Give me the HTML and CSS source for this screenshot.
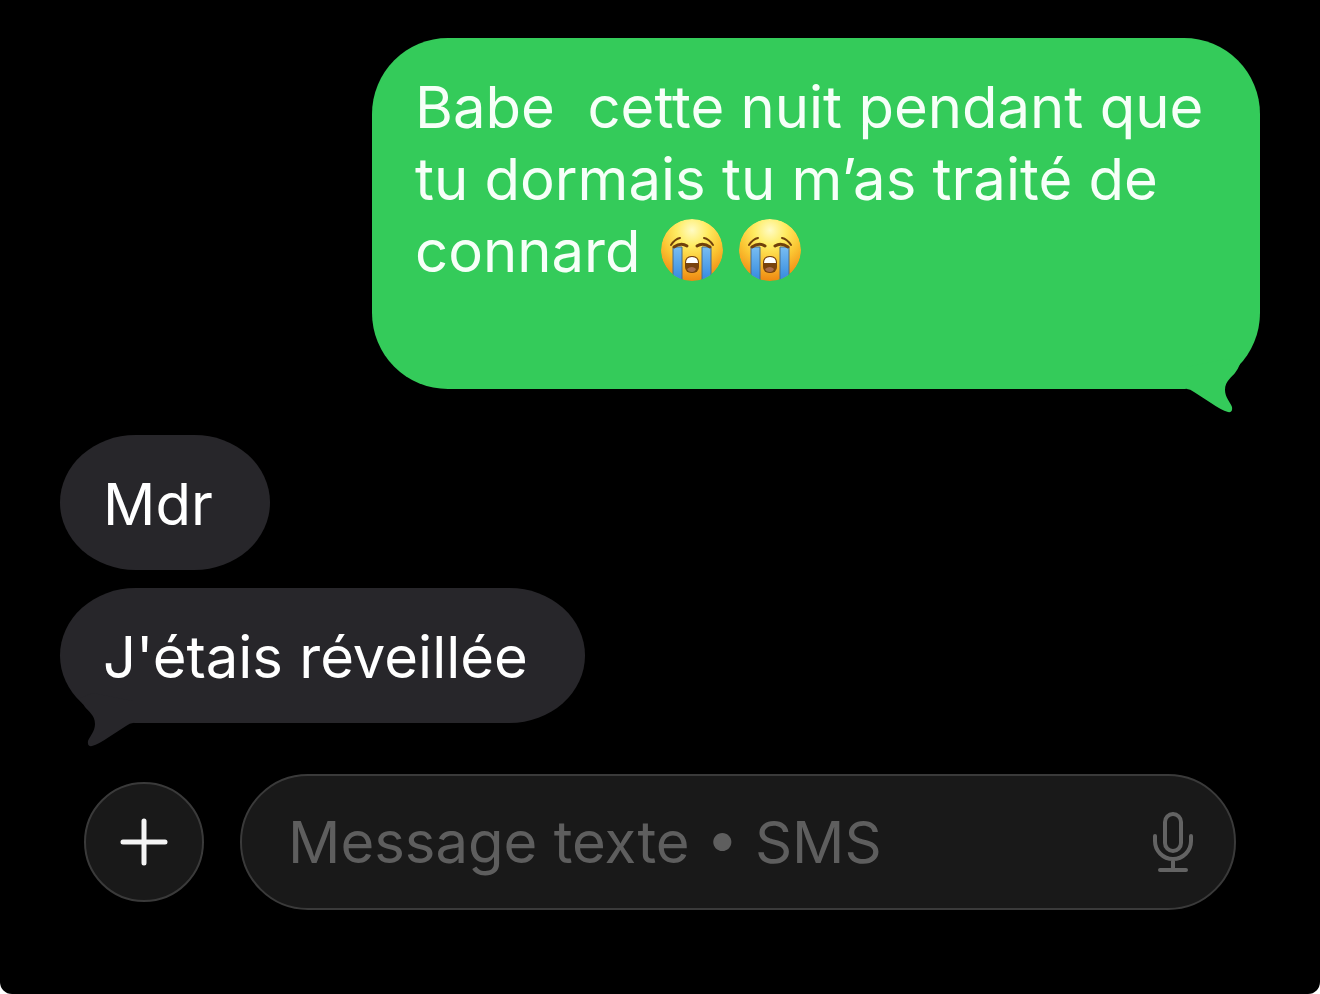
FILE: index.html
```html
<!DOCTYPE html>
<html lang="fr">
<head>
    <meta charset="UTF-8">
    <meta name="viewport" content="width=device-width, initial-scale=1.0">
    <title>Messages</title>
    <link rel="stylesheet" href="styles.css">
</head>
<body>
    <!-- Shapes shared by the messages -->
    <svg class="defs" aria-hidden="true">
        <defs>
            <radialGradient id="face" cx="50%" cy="18%" r="84%">
                <stop offset="0" stop-color="#fffbc4"/>
                <stop offset="0.3" stop-color="#ffec62"/>
                <stop offset="0.6" stop-color="#fbc532"/>
                <stop offset="1" stop-color="#ee8410"/>
            </radialGradient>
            <linearGradient id="tear" x1="0" y1="0" x2="0" y2="1">
                <stop offset="0" stop-color="#78bdf2"/>
                <stop offset="1" stop-color="#3389de"/>
            </linearGradient>
            <clipPath id="round"><circle cx="31" cy="31" r="31"/></clipPath>
            <symbol id="sob" viewBox="0 0 62 62">
                <g clip-path="url(#round)">
                    <circle cx="31" cy="31" r="31" fill="url(#face)"/>
                    <path d="M12 28h9v34h-9zM41 28h9v34h-9z" fill="url(#tear)" stroke="#4a6d88" stroke-width="1"/>
                </g>
                <g fill="none" stroke="#70400b" stroke-linecap="round">
                    <path d="M10 26q4-6 9-7M43 19q5 1 9 7" stroke-width="2"/>
                    <path d="M13 28q7-5 13-1M36 27q6-4 13 1" stroke-width="3"/>
                </g>
                <rect x="24" y="37" width="14" height="17" rx="6" fill="#78420d"/>
                <path d="M25 44q0-6 6-6t6 6z" fill="#fff"/>
                <path d="M26 50q5-4 9 0-1 3-4 3-4 0-5-3z" fill="#a76a4c"/>
            </symbol>
            <symbol id="tail" viewBox="0 0 60 54">
                <path d="M0 8V30Q3 30 7 33L24 44Q34 51 41 53Q46 54 45 48C43 43 38 38 38 31C38 22 45 18 48 14Q51 10 53 5L40 0Z"/>
            </symbol>
        </defs>
    </svg>

    <main class="chat">
        <div class="bubble sent">
            <p>Babe  cette nuit pendant que tu dormais tu m’as traité de connard <svg class="emoji" role="img" aria-label="😭"><use href="#sob"/></svg><svg class="emoji" role="img" aria-label="😭"><use href="#sob"/></svg><br><br></p>
            <svg class="tail" aria-hidden="true"><use href="#tail"/></svg>
        </div>
        <div class="bubble received">
            <p>Mdr</p>
        </div>
        <div class="bubble received">
            <p>J'étais réveillée</p>
            <svg class="tail" aria-hidden="true"><use href="#tail"/></svg>
        </div>
    </main>

    <form class="composer">
        <button class="add" type="button" aria-label="Ajouter">
            <svg viewBox="0 0 48 48"><path d="M24 3v42M3 24h42"/></svg>
        </button>
        <div class="field">
            <input type="text" placeholder="Message texte • SMS" aria-label="Message texte • SMS">
            <button class="mic" type="button" aria-label="Dicter">
                <svg viewBox="0 0 42 60">
                    <rect x="13" y="2" width="16" height="37" rx="8"/>
                    <path d="M3 24v5a18 18 0 0 0 36 0v-5M21 47v11M8 58h26"/>
                </svg>
            </button>
        </div>
    </form>
</body>
</html>
```
FILE: styles.css
```css
* {
    box-sizing: border-box;
}

html {
    background: #fff;
}

body {
    margin: 0;
    min-height: 100vh;
    background: #000;
    border-radius: 0 0 12px 12px;
    font-family: Inter, "Liberation Sans", sans-serif;
    font-size: 58px;
    line-height: 72px;
    color: #fff;
}

.defs {
    position: absolute;
    width: 0;
    height: 0;
}

.chat {
    display: flex;
    flex-direction: column;
    align-items: flex-start;
    gap: 18px;
    padding: 38px 60px 0;
}

/* Bubbles */
.bubble {
    position: relative;
    padding: 33px 57px 30px 43px;
    border-radius: 76px / 68px;
}

.bubble p {
    margin: 0;
    white-space: pre-wrap;
}

.sent {
    align-self: flex-end;
    width: 74%;
    margin-bottom: 28px;
    padding-right: 43px;
    border-radius: 76px;
    background: #34cb5a;
    color: #f6fff8;
}

.received {
    background: #27262a;
}

.tail {
    position: absolute;
    bottom: -24px;
    width: 60px;
    height: 54px;
}

.sent .tail {
    right: 13px;
    fill: #34cb5a;
}

.received .tail {
    left: 13px;
    fill: #27262a;
    transform: scaleX(-1);
}

.emoji {
    width: 62px;
    height: 62px;
    margin: -8px 12px -8px 4px;
    vertical-align: -1px;
}

/* Bottom bar */
.composer {
    display: flex;
    align-items: center;
    gap: 36px;
    padding: 51px 84px 0;
}

button {
    padding: 0;
    border: none;
    background: none;
    cursor: pointer;
}

button svg {
    display: block;
    fill: none;
    stroke-linecap: round;
}

.add {
    display: flex;
    flex: none;
    align-items: center;
    justify-content: center;
    width: 120px;
    height: 120px;
    border: 2px solid #3a3a3a;
    border-radius: 50%;
    background: #191919;
}

.add svg {
    width: 48px;
    height: 48px;
    stroke: #f4f4f4;
    stroke-width: 5;
}

.field {
    display: flex;
    flex: 1;
    align-items: center;
    min-width: 0;
    height: 136px;
    padding: 0 40px 0 46px;
    border: 2px solid #3a3a3a;
    border-radius: 68px;
    background: #191919;
}

.field input {
    flex: 1;
    min-width: 0;
    padding: 0;
    border: none;
    outline: none;
    background: none;
    color: #fff;
    font: inherit;
}

.field input::placeholder {
    color: #5e5e5e;
    opacity: 1;
}

.mic svg {
    width: 42px;
    height: 60px;
    stroke: #636363;
    stroke-width: 4;
}
```
